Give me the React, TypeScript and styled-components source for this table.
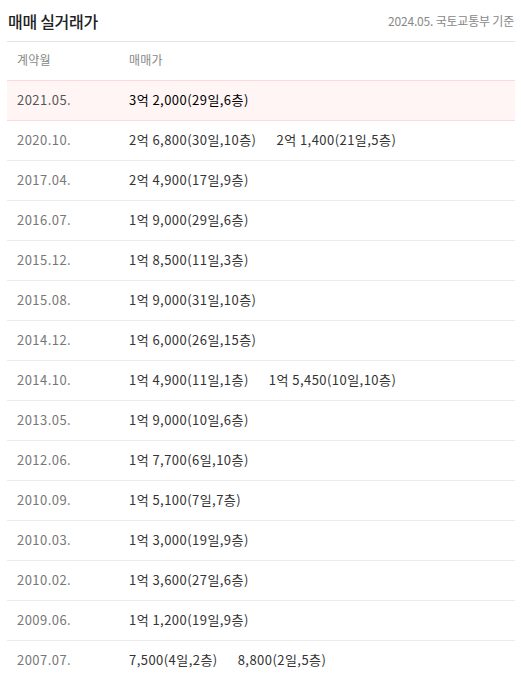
import styled, { createGlobalStyle } from "styled-components";

const GlobalStyle = createGlobalStyle`
  body {
    margin: 0;
    background: #fff;
    font-family: "Noto Sans CJK KR", "Noto Sans", sans-serif;
  }
`;

type Deal = { price: string; day: number; floor: number };
type Trade = { month: string; deals: Deal[]; latest?: boolean };

const trades: Trade[] = [
  { month: "2021.05.", latest: true, deals: [{ price: "3억 2,000", day: 29, floor: 6 }] },
  {
    month: "2020.10.",
    deals: [
      { price: "2억 6,800", day: 30, floor: 10 },
      { price: "2억 1,400", day: 21, floor: 5 },
    ],
  },
  { month: "2017.04.", deals: [{ price: "2억 4,900", day: 17, floor: 9 }] },
  { month: "2016.07.", deals: [{ price: "1억 9,000", day: 29, floor: 6 }] },
  { month: "2015.12.", deals: [{ price: "1억 8,500", day: 11, floor: 3 }] },
  { month: "2015.08.", deals: [{ price: "1억 9,000", day: 31, floor: 10 }] },
  { month: "2014.12.", deals: [{ price: "1억 6,000", day: 26, floor: 15 }] },
  {
    month: "2014.10.",
    deals: [
      { price: "1억 4,900", day: 11, floor: 1 },
      { price: "1억 5,450", day: 10, floor: 10 },
    ],
  },
  { month: "2013.05.", deals: [{ price: "1억 9,000", day: 10, floor: 6 }] },
  { month: "2012.06.", deals: [{ price: "1억 7,700", day: 6, floor: 10 }] },
  { month: "2010.09.", deals: [{ price: "1억 5,100", day: 7, floor: 7 }] },
  { month: "2010.03.", deals: [{ price: "1억 3,000", day: 19, floor: 9 }] },
  { month: "2010.02.", deals: [{ price: "1억 3,600", day: 27, floor: 6 }] },
  { month: "2009.06.", deals: [{ price: "1억 1,200", day: 19, floor: 9 }] },
  {
    month: "2007.07.",
    deals: [
      { price: "7,500", day: 4, floor: 2 },
      { price: "8,800", day: 2, floor: 5 },
    ],
  },
];

const Section = styled.section`
  padding: 0 6px 0 7px;
`;

const TitleBar = styled.header`
  display: flex;
  align-items: center;
  justify-content: space-between;
  height: 41px;
  padding: 0 1px;
  border-bottom: 1px solid #e3e3e3;
`;

const Title = styled.h2`
  margin: 0;
  font-size: 16px;
  font-weight: 500;
  color: #222;
  letter-spacing: -0.3px;
`;

const Source = styled.span`
  font-size: 12px;
  color: #888;
  letter-spacing: -0.2px;
`;

const Row = styled.div<{ $head?: boolean; $latest?: boolean }>`
  display: grid;
  grid-template-columns: 112px 1fr;
  align-items: center;
  box-sizing: border-box;
  height: ${(p) => (p.$head ? "38px" : p.$latest ? "41px" : "40px")};
  padding: 0 0 3px 10px;
  border-top: ${(p) => (p.$latest ? "1px solid #fdd9d9" : "none")};
  border-bottom: ${(p) =>
    p.$head ? "none" : p.$latest ? "1px solid #fdd9d9" : "1px solid #ececec"};
  background: ${(p) => (p.$latest ? "#fff5f5" : "transparent")};
  font-size: ${(p) => (p.$head ? "12px" : "13px")};
  letter-spacing: ${(p) => (p.$head ? "0.2px" : "0.45px")};
`;

const Month = styled.span<{ $head?: boolean; $latest?: boolean }>`
  color: ${(p) => (p.$head ? "#888" : p.$latest ? "#555" : "#777")};
`;

const Deals = styled.div`
  display: flex;
  gap: 20px;
`;

const Price = styled.span<{ $head?: boolean; $latest?: boolean }>`
  color: ${(p) => (p.$head ? "#888" : p.$latest ? "#000" : "#333")};
  white-space: nowrap;
`;

export default function App() {
  return (
    <Section>
      <GlobalStyle />
      <TitleBar>
        <Title>매매 실거래가</Title>
        <Source>2024.05. 국토교통부 기준</Source>
      </TitleBar>
      <Row $head>
        <Month $head>계약월</Month>
        <Price $head>매매가</Price>
      </Row>
      {trades.map((t) => (
        <Row key={t.month} $latest={t.latest}>
          <Month $latest={t.latest}>{t.month}</Month>
          <Deals>
            {t.deals.map((d) => (
              <Price key={d.price} $latest={t.latest}>
                {d.price}({d.day}일,{d.floor}층)
              </Price>
            ))}
          </Deals>
        </Row>
      ))}
    </Section>
  );
}
